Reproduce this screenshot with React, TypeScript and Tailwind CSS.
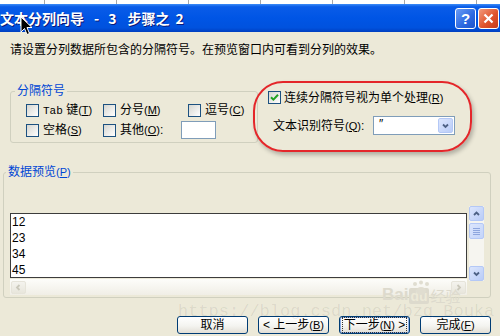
import React from 'react';

const Mn: React.FC<{ k: string }> = ({ k }) => (
  <span className="text-[11px]">
    (<span className="underline">{k}</span>)
  </span>
);

const CheckBox: React.FC<{ checked?: boolean }> = ({ checked }) => (
  <span className="w-[13px] h-[13px] shrink-0 border border-[#1C5180] bg-[linear-gradient(135deg,#D6D6D0,#FFFFFF)] flex items-center justify-center">
    {checked && (
      <svg width="9" height="9" viewBox="0 0 9 9">
        <path d="M1 4.2 L3.4 6.6 L8 1.8" stroke="#21A121" strokeWidth="2" fill="none" />
      </svg>
    )}
  </span>
);

const Chevron: React.FC<{ dir: 'up' | 'down' | 'left' | 'right'; color: string }> = ({ dir, color }) => {
  const d = {
    up: 'M2 6 L4.5 3.5 L7 6',
    down: 'M2 3.5 L4.5 6 L7 3.5',
    left: 'M5.5 2 L3 4.5 L5.5 7',
    right: 'M3.5 2 L6 4.5 L3.5 7',
  }[dir];
  return (
    <svg width="9" height="9" viewBox="0 0 9 9">
      <path d={d} stroke={color} strokeWidth="1.8" fill="none" />
    </svg>
  );
};

const ScrollBtn: React.FC<{ dir: 'up' | 'down' | 'left' | 'right'; disabled?: boolean; className?: string }> = ({
  dir,
  disabled,
  className = '',
}) => (
  <div
    className={`flex items-center justify-center rounded-[2px] ${
      disabled
        ? 'border border-[#E6E4DA] bg-[linear-gradient(to_bottom,#F4F3EE,#E8E6DC)]'
        : 'border border-[#B4C8F6] bg-[linear-gradient(135deg,#DCE6FD,#B9CCF8)]'
    } ${className}`}
  >
    <Chevron dir={dir} color={disabled ? '#CAC8BB' : '#4D6185'} />
  </div>
);

const XpButton: React.FC<{ children: React.ReactNode; focused?: boolean }> = ({ children, focused }) => (
  <div
    className={`w-[71px] h-[18px] rounded-[3px] border border-[#003C74] bg-[linear-gradient(to_bottom,#FFFFFF,#F4F4F0_55%,#E2DFD6)] flex items-center justify-center text-[12px] leading-[14px] text-black whitespace-nowrap ${
      focused ? 'shadow-[inset_0_0_0_1px_#8CAEE8]' : ''
    }`}
  >
    <span className={focused ? 'px-[1px] outline outline-1 outline-dotted outline-[#333]' : ''}>{children}</span>
  </div>
);

export default function App() {
  return (
    <div className="relative w-[500px] h-[336px] overflow-hidden bg-[#ECE9D8] flex flex-col font-['Liberation_Sans','Noto_Sans_CJK_SC',sans-serif] text-black select-none">
      {/* sheet behind the dialog */}
      <div className="h-[4px] bg-white flex shrink-0">
        <div className="w-[45px] border-r border-[#A8A8A8]" />
        {[0, 1, 2, 3, 4, 5].map((i) => (
          <div key={i} className="w-[72px] border-r border-[#A8A8A8]" />
        ))}
      </div>

      {/* title bar */}
      <div className="h-[28px] shrink-0 flex items-center justify-between pr-[1px] bg-[linear-gradient(to_bottom,#3C8CF7_0%,#0A5CE8_10%,#0055E5_50%,#0052DE_85%,#003FC0_100%)]">
        <div className="flex items-center text-white font-bold text-[14px] leading-[16px] [text-shadow:1px_1px_#0A1A7A] font-['Noto_Sans_CJK_SC',sans-serif]">
          <span>文本分列向导</span>
          <span className="ml-[10px]">-</span>
          <span className="ml-[9px]">3</span>
          <span className="ml-[11px]">步骤之</span>
          <span className="ml-[6px]">2</span>
        </div>
        <div className="flex gap-[2px]">
          <div className="w-[21px] h-[21px] rounded-[3px] border border-white bg-[linear-gradient(135deg,#6A9CF5,#2C68E0_60%,#1E54CC)] flex items-center justify-center text-white font-bold text-[15px] leading-none font-['Liberation_Sans',sans-serif]">
            ?
          </div>
          <div className="w-[21px] h-[21px] rounded-[3px] border border-white bg-[linear-gradient(135deg,#F29A7C,#E0552E_55%,#C63A1A)] flex items-center justify-center">
            <svg width="11" height="11" viewBox="0 0 11 11">
              <path d="M1.5 1.5 L9.5 9.5 M9.5 1.5 L1.5 9.5" stroke="white" strokeWidth="2.2" />
            </svg>
          </div>
        </div>
      </div>

      {/* body */}
      <div className="flex-1 flex flex-col text-[12px] leading-[14px]">
        <div className="mt-[11px] pl-[10px] h-[14px]">请设置分列数据所包含的分隔符号。在预览窗口内可看到分列的效果。</div>

        <div className="mt-[24px] flex h-[71px]">
          <fieldset className="ml-[10px] mt-[3px] w-[248px] h-[59px] border border-[#D0D0BF] rounded-[3px]">
            <legend className="ml-[4px] px-[2px] text-[#0046D5]">分隔符号</legend>
            <div className="pl-[15px] pt-[2px] flex flex-col">
              <div className="h-[20px] flex items-center">
                <div className="w-[77px] flex items-center gap-[4px]">
                  <CheckBox />
                  <span>
                    <span className="font-['Liberation_Mono',monospace] text-[11px]">Tab</span> 键<Mn k="T" />
                  </span>
                </div>
                <div className="w-[85px] flex items-center gap-[4px]">
                  <CheckBox />
                  <span>
                    分号<Mn k="M" />
                  </span>
                </div>
                <div className="flex items-center gap-[4px]">
                  <CheckBox />
                  <span>
                    逗号<Mn k="C" />
                  </span>
                </div>
              </div>
              <div className="h-[20px] flex items-center">
                <div className="w-[77px] flex items-center gap-[4px]">
                  <CheckBox />
                  <span>
                    空格<Mn k="S" />
                  </span>
                </div>
                <div className="flex items-center gap-[4px]">
                  <CheckBox />
                  <span>
                    其他<Mn k="O" />:
                  </span>
                  <div className="ml-[14px] w-[35px] h-[18px] border border-[#7F9DB9] bg-white" />
                </div>
              </div>
            </div>
          </fieldset>

          <div className="relative w-[214px] h-[71px] pt-[10px] pl-[10px]">
            <div className="absolute -left-[5px] top-0 right-0 bottom-0 rounded-[30px] border-2 border-[#E4262A] shadow-[2px_3px_4px_rgba(0,0,0,0.25)]" />
            <div className="flex items-center h-[13px] gap-[3px]">
              <CheckBox checked />
              <span>
                连续分隔符号视为单个处理<Mn k="R" />
              </span>
            </div>
            <div className="mt-[12px] pl-[5px] flex items-center h-[19px]">
              <span className="w-[100px]">
                文本识别符号<Mn k="Q" />:
              </span>
              <div className="w-[82px] h-[19px] border border-[#7F9DB9] bg-white flex">
                <span className="pl-[5px] pt-[1px] text-[12px] leading-[12px]">″</span>
                <ScrollBtn dir="down" className="ml-auto m-[1px] w-[15px] h-[15px]" />
              </div>
            </div>
          </div>
        </div>

        <fieldset className="mt-[13px] ml-[3px] w-[488px] h-[133px] border border-[#D0D0BF] rounded-[3px]">
          <legend className="ml-[2px] px-[2px] text-[#0046D5]">
            数据预览<Mn k="P" />
          </legend>
          <div className="flex items-start pl-[6px] pt-[27px]">
            <div className="mt-[7px] w-[457px] flex flex-col">
              <div className="h-[65px] border border-[#3C3C3C] bg-white overflow-hidden pl-[1px] font-['Liberation_Sans',sans-serif] text-[12px] leading-[16px]">
                <div>12</div>
                <div>23</div>
                <div>34</div>
                <div>45</div>
              </div>
              <div className="mt-[1px] h-[16px] flex items-center justify-between px-[1px] bg-[linear-gradient(to_bottom,#FDFDFA,#F0EEE6)]">
                <ScrollBtn dir="left" disabled className="w-[15px] h-[13px]" />
                <ScrollBtn dir="right" disabled className="w-[15px] h-[13px]" />
              </div>
            </div>
            <div className="ml-[2px] w-[15px] h-[75px] flex flex-col bg-[#F6F5F0]">
              <ScrollBtn dir="up" className="w-[15px] h-[15px]" />
              <div className="mt-[2px] w-[15px] h-[16px] rounded-[2px] border border-[#B4C8F6] bg-[linear-gradient(135deg,#DCE6FD,#C3D4FA)] flex flex-col items-center justify-center gap-[1px]">
                {[0, 1, 2, 3].map((i) => (
                  <span key={i} className="w-[7px] h-[1px] bg-[#8EA6DE]" />
                ))}
              </div>
              <ScrollBtn dir="down" className="mt-auto w-[15px] h-[15px]" />
            </div>
          </div>
        </fieldset>

        <div className="mt-[18px] flex justify-end gap-[10px] pr-[9px]">
          <XpButton>取消</XpButton>
          <XpButton>
            &lt; 上一步<Mn k="B" />
          </XpButton>
          <XpButton focused>
            下一步<Mn k="N" /> &gt;
          </XpButton>
          <XpButton>
            完成<Mn k="F" />
          </XpButton>
        </div>
      </div>

      {/* watermarks */}
      <div className="absolute left-[382px] top-[286px] flex items-end text-[#DDDACD] pointer-events-none">
        <span className="font-['Liberation_Sans',sans-serif] font-bold text-[17px] leading-[18px]">Bai</span>
        <span className="ml-[1px] px-[1px] rounded-[2px] bg-[#DDDACD] text-[#ECE9D8] font-['Liberation_Sans',sans-serif] font-bold text-[14px] leading-[16px]">du</span>
        <span className="ml-[2px] text-[15px] leading-[17px] font-['Noto_Sans_CJK_SC',sans-serif]">经验</span>
      </div>
      <svg className="absolute left-[410px] top-[280px] pointer-events-none" width="22" height="16" viewBox="0 0 22 16">
        <g fill="#E0DDD0">
          <circle cx="5" cy="4" r="2" />
          <circle cx="11" cy="2.5" r="2" />
          <circle cx="17" cy="4" r="2" />
          <ellipse cx="11" cy="11" rx="5" ry="4" />
        </g>
      </svg>
      <div className="absolute left-[178px] top-[302px] whitespace-pre font-['Liberation_Mono',monospace] text-[17px] leading-[20px] text-[#000]/[0.08] pointer-events-none">
        https://blog.csdn.net/bzq_Bouka
      </div>

      {/* mouse pointer */}
      <svg className="absolute left-[20px] top-[16px] pointer-events-none" width="13" height="21" viewBox="0 0 13 21">
        <path d="M1 1 L1 16 L4.5 12.5 L7 18.5 L9.5 17.5 L7 11.5 L12 11.5 Z" fill="black" stroke="white" strokeWidth="1" />
      </svg>
    </div>
  );
}
